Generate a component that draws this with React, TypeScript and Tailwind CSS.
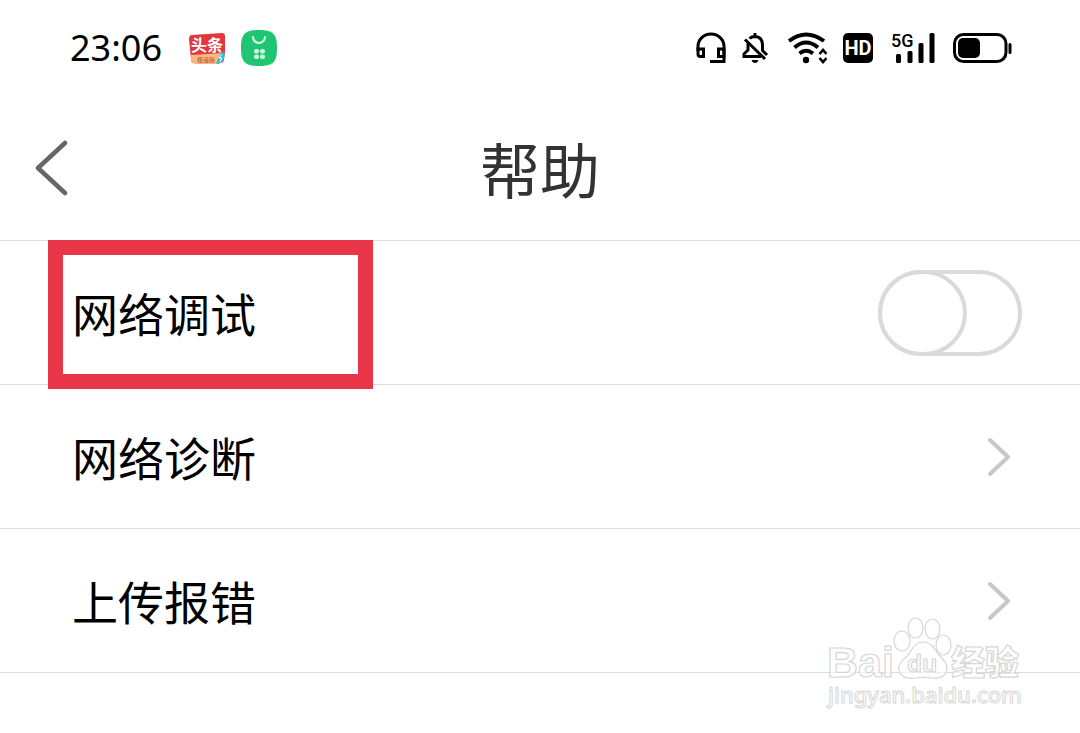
import { useState } from "react";

const StatusBar = () => (
  <div className="flex h-24 items-center justify-between pl-[70px] pr-[68px]">
    <div className="flex items-center">
      <span className="w-[118px] font-['Noto_Sans',sans-serif] text-4xl text-black">23:06</span>
      <NewsIcon />
      <StoreIcon />
    </div>
    <div className="flex items-center text-black">
      <HeadsetIcon />
      <BellOffIcon />
      <WifiIcon />
      <HdIcon />
      <SignalIcon />
      <BatteryIcon />
    </div>
  </div>
);

const NewsIcon = () => (
  <svg className="mt-1 h-9 w-[38px]" viewBox="0 0 38 36" aria-hidden="true">
    <path d="M4 3Q19 2 34 1Q37 1 37 4V20L36 27Q36 31 32 31H6Q3 31 3 27L1 7Q1 3 4 3Z" fill="#e2373f" />
    <path d="M3 23Q19 22 36 21L35 27Q34 32 29 32H8Q4 32 3 28Z" fill="#fbb780" />
    <path d="M33 20L37 21L36 27Q34 32 28 32Z" fill="#35b9d4" />
    <path d="M34 22l-3 4h3l-2 4" fill="none" stroke="#fff" strokeWidth="1" />
    <text x="3" y="19" fontSize="16" fontWeight="700" fill="#fff" fontFamily="'Noto Sans CJK SC', sans-serif">头条</text>
    <text x="9" y="30" fontSize="6" fill="#b74a28" fontFamily="'Noto Sans CJK SC', sans-serif">极速版</text>
  </svg>
);

const StoreIcon = () => (
  <svg className="ml-3.5 size-[38px]" viewBox="0 0 38 38" aria-hidden="true">
    <path d="M19 1C33 1 37 5 37 19S33 37 19 37S1 33 1 19S5 1 19 1Z" fill="#20c573" />
    <path d="M13 8a6 6 0 0 0 12 0" fill="none" stroke="#d8ffe6" strokeWidth="2" strokeLinecap="round" />
    <g fill="#c9fbdc">
      <rect x="14" y="20" width="5" height="4.5" rx="2" />
      <rect x="20" y="20" width="5" height="4.5" rx="2" />
      <rect x="14" y="25.5" width="5" height="4.5" rx="2" />
      <rect x="20" y="25.5" width="5" height="4.5" rx="2" />
    </g>
  </svg>
);

const HeadsetIcon = () => (
  <svg className="h-8 w-[30px]" viewBox="0 0 30 32" fill="none" stroke="currentColor" strokeWidth="3" aria-label="耳机">
    <path d="M2 19V14.5A13 12.5 0 0 1 28 14.5V29.5H14" />
    <path d="M2 17H7.5V24.5H4.5Q2 24.5 2 22ZM28 17H22.5V24.5H28Z" />
  </svg>
);

const BellOffIcon = () => (
  <svg className="ml-[15px] h-8 w-7" viewBox="0 0 28 32" fill="none" stroke="currentColor" strokeWidth="3" aria-label="静音">
    <path d="M14 1V5M8.5 6.5Q10.5 4.5 14 4.5Q21.5 5 21.5 13V18.5L26 23" />
    <path d="M7 10V18L3 22V24.5H20M4 7.500L24 27" />
    <path d="M10.5 28H17.5Q16.5 31 14 31T10.5 28Z" fill="currentColor" stroke="none" />
  </svg>
);

const WifiIcon = () => (
  <svg className="ml-[18px] h-8 w-10" viewBox="0 0 40 32" fill="none" stroke="currentColor" aria-label="无线网络">
    <path d="M2 9Q19 -4 37 9M7.5 15.5Q19 5.5 31 15.5M12.5 21.5Q19 16 26 21.5" strokeWidth="4" />
    <circle cx="19" cy="28" r="3.2" fill="currentColor" stroke="none" />
    <path d="M32.500 22l3.500-4 3.500 4M32.500 26l3.500 4 3.500-4" strokeWidth="2.600" />
  </svg>
);

const HdIcon = () => (
  <svg className="ml-4 h-8 w-[30px]" viewBox="0 0 30 32" aria-label="HD">
    <rect x="0" y="1" width="30" height="30" rx="5" fill="currentColor" />
    <text x="15" y="23" textAnchor="middle" fontSize="20" fontWeight="700" fill="#fff" fontFamily="Roboto, sans-serif">HD</text>
  </svg>
);

const SignalIcon = () => (
  <svg className="ml-[18px] h-9 w-11" viewBox="0 0 44 36" fill="currentColor" aria-label="5G">
    <text x="0" y="17" fontSize="18" fontWeight="500" fontFamily="Roboto, sans-serif">5G</text>
    <rect x="5" y="24" width="5" height="9" rx="1.5" />
    <rect x="16.5" y="21" width="5" height="12" rx="1.5" />
    <rect x="27.5" y="13" width="5" height="20" rx="1.5" />
    <rect x="38.5" y="3" width="5" height="30" rx="1.5" />
  </svg>
);

const BatteryIcon = () => (
  <svg className="ml-[18px] h-8 w-[59px]" viewBox="0 0 59 32" aria-label="电量">
    <rect x="1.5" y="2.5" width="51.5" height="27" rx="9" fill="none" stroke="currentColor" strokeWidth="3" />
    <rect x="5" y="6" width="22" height="20" rx="5" fill="currentColor" />
    <rect x="55.5" y="11" width="3" height="11" rx="1.5" fill="currentColor" />
  </svg>
);

const ChevronIcon = () => (
  <svg className="h-10 w-6" viewBox="0 0 24 40" fill="none" stroke="#c7c7c7" strokeWidth="4" strokeLinecap="round" strokeLinejoin="round" aria-hidden="true">
    <path d="M3 3L21 20L3 37" />
  </svg>
);

const Watermark = () => (
  <svg className="pointer-events-none absolute right-[52px] top-[374px] h-[100px] w-[204px]" viewBox="0 0 204 100" aria-hidden="true">
    <g fill="#fff" fillOpacity="0.6" stroke="#d6d6d6" strokeWidth="1.2" strokeLinejoin="round">
      <text x="3" y="63" fontSize="43" fontWeight="700" fontFamily="'Liberation Sans', sans-serif">Bai</text>
      <ellipse cx="78" cy="27" rx="8" ry="10" />
      <ellipse cx="91.5" cy="14" rx="7.5" ry="10" />
      <ellipse cx="108.5" cy="15" rx="7.5" ry="10" />
      <ellipse cx="119.5" cy="31" rx="7.5" ry="10" />
      <path d="M99 28C107 28 111 35 115 41C121 47 125 52 122 58C119 65 111 65 99 63C89 65 78 66 75 57C73 49 81 45 85 40C89 34 91 28 99 28Z" />
      <text x="83" y="58" fontSize="24" fontWeight="600" fontFamily="'Noto Sans', sans-serif">du</text>
      <text x="127" y="61" fontSize="34" fontWeight="900" fontFamily="'Noto Sans CJK SC', sans-serif">经验</text>
      <text x="4" y="89" fontSize="22" fontWeight="500" strokeWidth="1" fontFamily="'Noto Sans', sans-serif">jingyan.baidu.com</text>
    </g>
  </svg>
);

const links = ["网络诊断", "上传报错"];

const App = () => {
  const [debug, setDebug] = useState(false);

  return (
    <div className="min-h-screen bg-white font-['Noto_Sans_CJK_SC',sans-serif] text-black">
      <StatusBar />

      <header className="grid h-36 grid-cols-[1fr_auto_1fr] items-center px-8">
        <button type="button" aria-label="返回" className="justify-self-start">
          <svg className="h-14 w-9" viewBox="0 0 36 56" fill="none" stroke="#666" strokeWidth="4.5" strokeLinecap="round" strokeLinejoin="round">
            <path d="M33 3L6 28L33 53" />
          </svg>
        </button>
        <h1 className="text-6xl text-[#333]">帮助</h1>
      </header>

      <main className="relative border-b border-[#dcdcdc]">
        <div className="relative flex h-36 items-center justify-between border-t border-[#dcdcdc] pl-[72px] pr-[58px]">
          <label htmlFor="debug" className="text-[46px]">网络调试</label>
          <input
            id="debug"
            type="checkbox"
            role="switch"
            checked={debug}
            onChange={(e) => setDebug(e.target.checked)}
            className="relative h-[86px] w-36 appearance-none rounded-full border-4 border-[#dadada] before:absolute before:-left-1 before:-top-1 before:h-[86px] before:w-[89px] before:rounded-full before:border-4 before:border-[#dadada] before:bg-white checked:bg-green-500 checked:before:left-[51px]"
          />
          {/* Highlight frame */}
          <div className="pointer-events-none absolute -top-px left-12 h-[149px] w-[325px] border-[15px] border-[#e93548]" />
        </div>

        {links.map((label) => (
          <a
            key={label}
            href="#"
            className="flex h-36 items-center justify-between border-t border-[#dcdcdc] pl-[72px] pr-[69px] text-[46px]"
          >
            {label}
            <ChevronIcon />
          </a>
        ))}

        <Watermark />
      </main>
    </div>
  );
};

export default App;
